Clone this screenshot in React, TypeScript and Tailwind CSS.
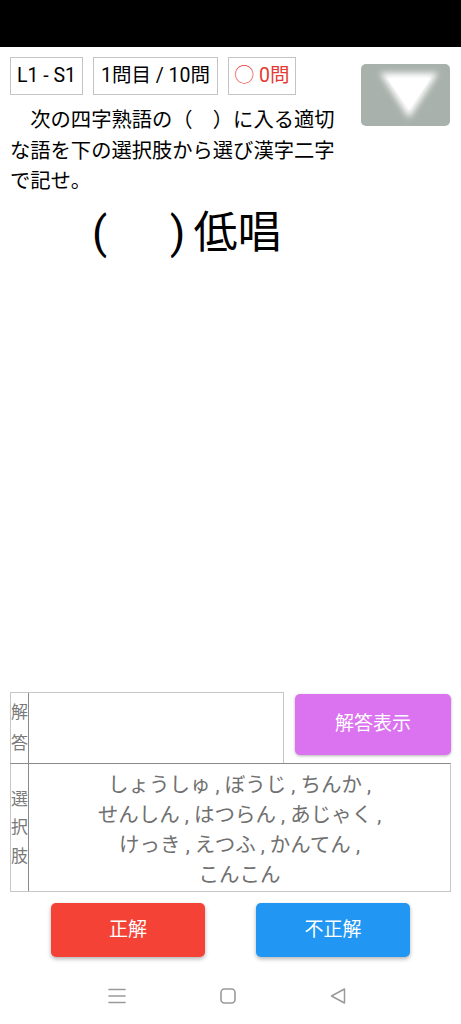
import React from "react";

const FONT = "Roboto, 'Noto Sans CJK JP', sans-serif";

export default function App() {
  return (
    <div
      className="w-[461px] h-[1024px] bg-white flex flex-col overflow-hidden"
      style={{ fontFamily: FONT }}
    >
      {/* status bar */}
      <div className="h-[47px] bg-black shrink-0" />

      {/* top content */}
      <div className="flex flex-row pt-[10px] pl-[10px] pr-[11px]">
        <div className="flex-1 flex flex-col">
          <div className="flex flex-row gap-[10px]">
            <div className="h-[38px] w-[73px] border border-[#c4c4c4] flex items-center justify-center text-[19.5px] text-black leading-none">
              L1 - S1
            </div>
            <div className="h-[38px] w-[125px] border border-[#c4c4c4] flex items-center justify-center text-[19.5px] text-black leading-none">
              1問目 / 10問
            </div>
            <div className="h-[38px] w-[68px] border border-[#c4c4c4] flex items-center justify-center text-[19.5px] text-[#e53935] leading-none">
              ◯ 0問
            </div>
          </div>
          <p className="mt-[10px] w-[336px] text-[20.3px] leading-[30.5px] text-black">
            {"\u3000次の四字熟語の（\u3000）に入る適切な語を下の選択肢から選び漢字二字で記せ。"}
          </p>
          <div className="mt-[8px] flex flex-row items-center pl-[82px] text-[44px] leading-[56px] text-black">
            <span>(</span>
            <span className="w-[63px]" />
            <span>)</span>
            <span className="w-[8px]" />
            <span>低唱</span>
          </div>
        </div>
        <div className="w-[89px] ml-[10px] pt-[7px]">
          <div className="h-[62px] w-[89px] rounded-[5px] bg-[#a9b1ac] overflow-hidden">
            <svg width="89" height="62" viewBox="0 0 89 62">
              <defs>
                <filter id="blur" x="-30%" y="-30%" width="160%" height="160%">
                  <feGaussianBlur stdDeviation="3" />
                </filter>
              </defs>
              <polygon points="19,9 77,9 48,54" fill="#ffffff" filter="url(#blur)" />
              <polygon points="26,14 70,14 48,46" fill="#ffffff" />
            </svg>
          </div>
        </div>
      </div>

      <div className="flex-1" />

      {/* answer row */}
      <div className="flex flex-row px-[10px] items-start">
        <div className="w-[274px] h-[71px] border border-[#c6c6c6] border-b-0 flex flex-row">
          <div className="w-[18px] border-r border-[#8a8a8a] flex flex-col items-center justify-center text-[17px] leading-[31px] text-[#7a7a7a]">
            <span>解</span>
            <span>答</span>
          </div>
          <div className="flex-1" />
        </div>
        <div className="ml-[11px] mt-[2px] w-[156px] h-[61px] rounded-[5px] bg-[#db73f0] shadow-[0_1px_3px_rgba(0,0,0,0.3)] flex items-center justify-center text-white text-[19px]">
          解答表示
        </div>
      </div>

      {/* choices */}
      <div className="mx-[10px] h-[129px] border border-[#c6c6c6] border-t-[#8a8a8a] flex flex-row">
        <div className="w-[18px] border-r border-[#8a8a8a] flex flex-col items-center justify-center text-[17px] leading-[28.5px] text-[#7a7a7a]">
          <span>選</span>
          <span>択</span>
          <span>肢</span>
        </div>
        <div className="flex-1 flex flex-col items-center justify-center pt-[4px] text-[20.5px] leading-[30px] text-[#707070] text-center">
          <span>しょうしゅ , ぼうじ , ちんか ,</span>
          <span>せんしん , はつらん , あじゃく ,</span>
          <span>けっき , えつふ , かんてん ,</span>
          <span>こんこん</span>
        </div>
      </div>

      {/* judge buttons */}
      <div className="flex flex-row pl-[51px] mt-[11px] gap-[51px]">
        <div className="w-[154px] h-[54px] rounded-[5px] bg-[#f44336] shadow-[0_2px_4px_rgba(0,0,0,0.3)] flex items-center justify-center text-white text-[19px]">
          正解
        </div>
        <div className="w-[154px] h-[54px] rounded-[5px] bg-[#2196f3] shadow-[0_2px_4px_rgba(0,0,0,0.3)] flex items-center justify-center text-white text-[19px]">
          不正解
        </div>
      </div>

      {/* nav bar */}
      <div className="h-[56px] mt-[11px] shrink-0 flex flex-row items-center">
        <div className="flex flex-row items-center pl-[108px]">
          <svg width="18" height="16" viewBox="0 0 18 16">
            <g stroke="#9a9a9a" strokeWidth="1.6" strokeLinecap="round">
              <line x1="1" y1="1.5" x2="17" y2="1.5" />
              <line x1="1" y1="8" x2="17" y2="8" />
              <line x1="1" y1="14.5" x2="17" y2="14.5" />
            </g>
          </svg>
          <svg className="ml-[94px]" width="16" height="16" viewBox="0 0 16 16">
            <rect x="1" y="1" width="14" height="14" rx="3.5" fill="none" stroke="#9a9a9a" strokeWidth="1.6" />
          </svg>
          <svg className="ml-[94px]" width="16" height="16" viewBox="0 0 16 16">
            <polygon points="14.5,1 14.5,15 1.5,8" fill="none" stroke="#9a9a9a" strokeWidth="1.5" strokeLinejoin="round" />
          </svg>
        </div>
      </div>
    </div>
  );
}
